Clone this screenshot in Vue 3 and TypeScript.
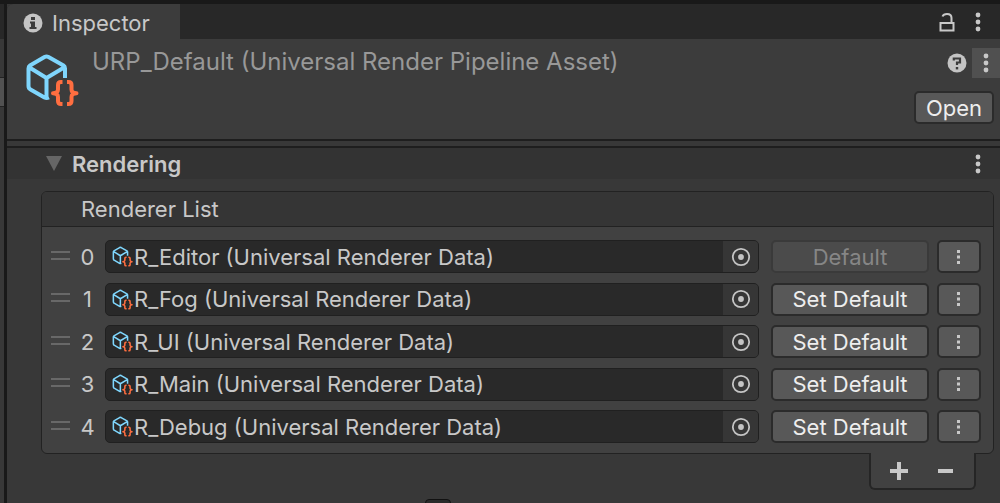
<script setup lang="ts">
import { ref } from 'vue'

interface Renderer {
  name: string
}

const renderers = ref<Renderer[]>([
  { name: 'R_Editor' },
  { name: 'R_Fog' },
  { name: 'R_UI' },
  { name: 'R_Main' },
  { name: 'R_Debug' },
])
const defaultIndex = ref(0)
</script>

<template>
  <svg class="defs" aria-hidden="true">
    <symbol id="asset" viewBox="0 0 54 54">
      <path class="cube" d="M40 25V15.500Q40 13.500 38.500 12.500L23.500 4Q21.500 3 19.500 4L5 12.500Q3.500 13.500 3.500 15.500V33Q3.500 35.500 5.500 36.500L19.500 44.500Q21.500 45.500 24 44.500M4.500 14.500L21.500 25L39 14.500M21.500 25V44" />
      <path class="brace" d="M37.500 29H36Q33 29 33 32V36.500Q33 40 28 40.300Q33 40.600 33 44V48Q33 51 36 51H37.500M42 29H43.500Q46.500 29 46.500 32V36.500Q46.500 40 51.500 40.300Q46.500 40.600 46.500 44V48Q46.500 51 43.500 51H42" />
    </symbol>
    <symbol id="dots" viewBox="0 0 6 20">
      <circle cx="3" cy="3" r="2.400" /><circle cx="3" cy="10" r="2.400" /><circle cx="3" cy="17" r="2.400" />
    </symbol>
  </svg>

  <div class="window">
    <div class="neighbor"><span class="neighbor-tab"></span><span class="neighbor-bar"></span></div>
    <main class="inspector">
      <div class="tabs">
        <div class="tab">
          <svg class="round-icon" viewBox="0 0 20 20" aria-hidden="true">
            <circle cx="10" cy="10" r="9.500" fill="#c4c4c4" />
            <path d="M8 4h4v3H8zM7 8.500h5V14h1.500v2h-7v-2H8v-3.500H7z" fill="#3c3c3c" />
          </svg>
          <span>Inspector</span>
        </div>
        <div class="tab-tools">
          <button class="bare" aria-label="Lock">
            <svg class="lock" viewBox="0 0 16 20" fill="none" stroke="#c8c8c8" stroke-width="2" aria-hidden="true">
              <path d="M1.500 11h13v7.500h-13zM12.500 10V6Q12.500 2 8 2Q4.500 2 3.500 4.500" />
            </svg>
          </button>
          <button class="bare" aria-label="Tab menu"><svg class="dots"><use href="#dots" /></svg></button>
        </div>
      </div>

      <header class="asset-header">
        <svg class="asset-icon" aria-hidden="true"><use href="#asset" /></svg>
        <h1>URP_Default (Universal Render Pipeline Asset)</h1>
        <div class="asset-tools">
          <div class="tool-row">
            <button class="bare help" aria-label="Help">
              <svg class="round-icon" viewBox="0 0 20 20" aria-hidden="true">
                <circle cx="10" cy="10" r="9.500" fill="#c4c4c4" />
                <path d="M6.800 7.500V5.500H13V9.500H10V12" fill="none" stroke="#3c3c3c" stroke-width="2.200" />
                <path d="M8.800 14h2.400v2.400H8.800z" fill="#3c3c3c" />
              </svg>
            </button>
            <button class="bare menu" aria-label="Asset menu"><svg class="dots"><use href="#dots" /></svg></button>
          </div>
          <button class="btn open">Open</button>
        </div>
      </header>

      <div class="section-header">
        <button class="bare fold" aria-expanded="true">
          <svg class="triangle" viewBox="0 0 16 15" aria-hidden="true"><path d="M0 0h16L8 15z" fill="#666" /></svg>
          <span>Rendering</span>
        </button>
        <button class="bare" aria-label="Rendering menu"><svg class="dots"><use href="#dots" /></svg></button>
      </div>

      <section class="body">
        <div class="list">
          <h2>Renderer List</h2>
          <ol class="rows">
            <li v-for="(item, index) in renderers" :key="item.name" class="row">
              <span class="handle"></span>
              <span class="index">{{ index }}</span>
              <div class="field">
                <svg class="small-icon" aria-hidden="true"><use href="#asset" /></svg>
                <span class="field-name">{{ item.name }} (Universal Renderer Data)</span>
                <button class="picker" :aria-label="`Select ${item.name}`">
                  <svg class="target" viewBox="0 0 20 20" aria-hidden="true">
                    <circle cx="10" cy="10" r="8.200" fill="none" stroke="#c4c4c4" stroke-width="1.800" />
                    <circle cx="10" cy="10" r="2.900" fill="#c4c4c4" />
                  </svg>
                </button>
              </div>
              <button class="btn default" :disabled="index === defaultIndex" @click="defaultIndex = index">
                {{ index === defaultIndex ? 'Default' : 'Set Default' }}
              </button>
              <button class="btn more" :aria-label="`${item.name} menu`">
                <svg class="square-dots" viewBox="0 0 4 14" aria-hidden="true">
                  <path d="M0 0h3v3H0zM0 5.500h3v3H0zM0 11h3v3H0z" fill="#c8c8c8" />
                </svg>
              </button>
            </li>
          </ol>
        </div>
        <div class="footer">
          <button class="bare" aria-label="Add renderer">
            <svg class="sign" viewBox="0 0 20 20" aria-hidden="true"><path d="M1 10h18M10 1v18" stroke="#c8c8c8" stroke-width="4" /></svg>
          </button>
          <button class="bare" aria-label="Remove renderer">
            <svg class="sign" viewBox="0 0 20 20" aria-hidden="true"><path d="M2 10h15" stroke="#c8c8c8" stroke-width="4" /></svg>
          </button>
        </div>
        <div class="next-control"></div>
      </section>
    </main>
  </div>
</template>

<style>
body {
  margin: 0;
  background: #191919;
}
</style>

<style scoped>
.defs {
  position: absolute;
  width: 0;
  height: 0;
}
.cube, .brace {
  fill: none;
  stroke: #7fd6fd;
  stroke-width: 4;
  stroke-linejoin: round;
}
.brace {
  stroke: #ff6e40;
}
.window {
  box-sizing: border-box;
  display: flex;
  gap: 3px;
  height: 100vh;
  overflow: hidden;
  padding-top: 4px;
  background: #191919;
  color: #c8c8c8;
  font: 22px/28px Inter, "Liberation Sans", sans-serif;
}
.neighbor {
  display: flex;
  flex-direction: column;
  flex: none;
  width: 4px;
  background: #383838;
}
.neighbor-tab {
  height: 35px;
  background: #282828;
}
.neighbor-bar {
  height: 28px;
  margin-top: 38px;
  border: solid #222;
  border-width: 1px 0;
  background: #515151;
}
.inspector {
  display: flex;
  flex-direction: column;
  flex: 1;
  min-width: 0;
  background: #383838;
}
.inspector > * {
  flex: none;
}
button {
  font: inherit;
  color: inherit;
}
svg {
  display: block;
  flex: none;
}
.bare {
  display: flex;
  align-items: center;
  justify-content: center;
  padding: 0;
  border: 0;
  background: none;
}
.tabs {
  display: flex;
  justify-content: space-between;
  height: 35px;
  background: #282828;
  border-radius: 6px 0 0;
}
.tab {
  display: flex;
  align-items: center;
  gap: 9px;
  box-sizing: border-box;
  padding: 2px 30px 0 16px;
  background: #3c3c3c;
  border-radius: 6px 0 0;
}
.round-icon {
  width: 20px;
  height: 20px;
}
.tab-tools {
  display: flex;
  gap: 20px;
  padding-right: 19px;
}
.lock {
  width: 16px;
  height: 20px;
}
.dots {
  width: 6px;
  height: 20px;
  fill: #c8c8c8;
}
.asset-header {
  display: flex;
  box-sizing: border-box;
  height: 102px;
  padding: 9px 0 0 18px;
  background: #3c3c3c;
  border-bottom: 2px solid #1e1e1e;
}
.asset-icon {
  width: 54px;
  height: 54px;
  margin-top: 5px;
}
h1, h2 {
  margin: 0;
  font: inherit;
}
h1 {
  flex: 1;
  margin-left: 13px;
  color: #989898;
  font-size: 24px;
  white-space: nowrap;
}
.asset-tools {
  display: flex;
  flex-direction: column;
  align-items: flex-end;
  gap: 13px;
}
.tool-row {
  display: flex;
  gap: 5px;
}
.menu {
  width: 28px;
  height: 30px;
  background: #505050;
}
.btn {
  box-sizing: border-box;
  height: 33px;
  padding: 0;
  border: 2px solid #2b2b2b;
  border-radius: 5px;
  background: #585858;
  color: #eee;
  line-height: 28px;
}
.open {
  width: 80px;
  margin-right: 6px;
}
.section-header {
  display: flex;
  align-items: center;
  justify-content: space-between;
  height: 31px;
  margin-top: 5px;
  padding: 0 19px 0 39px;
  border-top: 2px solid #1e1e1e;
  background: #333;
}
.fold {
  gap: 10px;
  font-weight: 600;
}
.triangle {
  width: 16px;
  height: 15px;
}
.body {
  display: flex;
  flex-direction: column;
  padding: 12px 6px 0 34px;
}
.list {
  border: 1px solid #222;
  border-radius: 6px;
  background: #414141;
}
.list h2 {
  height: 33px;
  padding: 1px 0 0 39px;
  line-height: 32px;
  border-bottom: 1px solid #222;
  border-radius: 5px 5px 0 0;
  background: #353535;
}
.rows {
  display: flex;
  flex-direction: column;
  justify-content: space-between;
  min-height: 203px;
  margin: 0;
  padding: 13px 12px 10px 9px;
  list-style: none;
}
.row {
  display: flex;
  align-items: center;
}
.handle {
  width: 19px;
  height: 5px;
  margin-bottom: 3px;
  border: solid #686868;
  border-width: 2px 0;
}
.index {
  width: 35px;
  text-align: center;
}
.field {
  display: flex;
  align-items: center;
  box-sizing: border-box;
  flex: 1;
  height: 33px;
  overflow: hidden;
  border: 1px solid #202020;
  border-radius: 5px;
  background: #292929;
}
.small-icon {
  width: 21px;
  height: 21px;
  margin-left: 6px;
}
.field-name {
  flex: 1;
  margin-left: 1px;
  white-space: nowrap;
}
.picker {
  display: flex;
  align-items: center;
  justify-content: center;
  width: 35px;
  height: 31px;
  padding: 0;
  border: 0;
  background: #363636;
}
.target {
  width: 20px;
  height: 20px;
}
.default {
  width: 158px;
  margin: 0 8px 0 12px;
}
.default:disabled {
  border-color: #3a3a3a;
  background: #4b4b4b;
  color: #868686;
}
.more {
  display: flex;
  align-items: center;
  justify-content: center;
  width: 44px;
}
.square-dots {
  width: 4px;
  height: 14px;
}
.footer {
  display: flex;
  align-items: center;
  align-self: flex-end;
  justify-content: center;
  gap: 27px;
  box-sizing: border-box;
  width: 107px;
  height: 37px;
  margin: -1px 18px 0 0;
  border: 2px solid #252525;
  border-top: 0;
  border-radius: 0 0 6px 6px;
  background: #414141;
}
.sign {
  width: 20px;
  height: 20px;
}
.next-control {
  width: 24px;
  height: 24px;
  margin: 9px 0 0 384px;
  border: 1px solid #111;
  border-radius: 4px;
  background: #2a2a2a;
}
</style>
